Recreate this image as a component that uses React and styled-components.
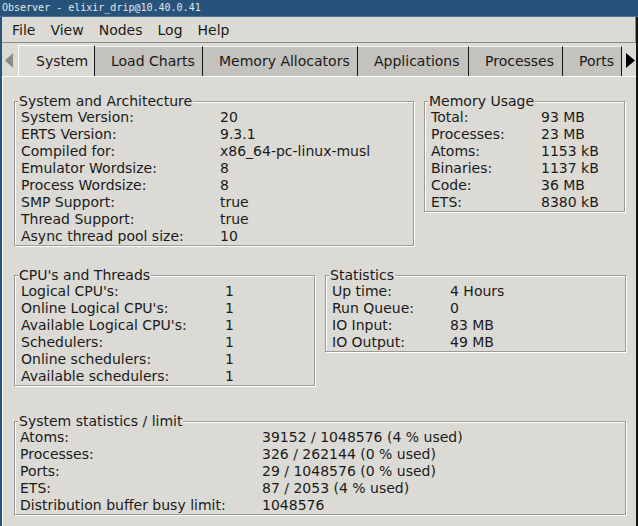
import React from "react";
import styled, { createGlobalStyle } from "styled-components";

const Global = createGlobalStyle`
  html, body { margin: 0; padding: 0; background: #dcdad5; }
  body { width: 638px; height: 526px; overflow: hidden; }
`;

const Window = styled.div`
  width: 638px;
  height: 526px;
  display: flex;
  flex-direction: column;
  overflow: hidden;
  font-family: "DejaVu Sans", Verdana, sans-serif;
  font-size: 14px;
  color: #1a1a1a;
`;

const TitleBar = styled.div`
  flex: none;
  height: 16px;
  background: #27537a;
  border-bottom: 1px solid #4a7096;
  color: #e2e6ea;
  font-family: "DejaVu Sans Mono", monospace;
  font-size: 10px;
  line-height: 15px;
  padding-left: 2px;
  white-space: pre;
`;

const Frame = styled.div`
  flex: 1;
  min-height: 0;
  display: flex;
  flex-direction: column;
  border-left: 2px solid #27537a;
  border-right: 2px solid #141414;
  background: #dcdad5;
`;

const MenuBar = styled.div`
  flex: none;
  height: 25px;
  display: flex;
  align-items: center;
  gap: 15px;
  padding-left: 10px;
  border-bottom: 1px solid #8a8884;
  border-right: 1px solid #8a8884;
`;

const MenuItem = styled.span`
  line-height: 17px;
  padding-top: 1px;
`;

const TabStrip = styled.div`
  flex: none;
  height: 33px;
  display: flex;
  align-items: flex-end;
`;

const ArrowBox = styled.div`
  flex: ${(p) => (p.$grow ? 1 : "none")};
  width: ${(p) => (p.$grow ? "auto" : "16px")};
  height: 33px;
  display: flex;
  align-items: center;
  padding-left: ${(p) => (p.$grow ? "4px" : "3px")};
  padding-top: 1px;
  box-sizing: border-box;
`;

const Tab = styled.div`
  flex: none;
  box-sizing: border-box;
  width: ${(p) => p.$w}px;
  height: ${(p) => (p.$active ? "31px" : "30px")};
  display: flex;
  align-items: center;
  padding: ${(p) => (p.$active ? "1px 0 0 17px" : "0 0 0 16px")};
  background: ${(p) => (p.$active ? "#dcdad5" : "#c4c2bd")};
  border-top: 1px solid ${(p) => (p.$active ? "#ffffff" : "#f2f1ef")};
  border-left: ${(p) => (p.$active ? "1px solid #ffffff" : "none")};
  border-right: 1px solid #141414;
  line-height: 17px;
  white-space: nowrap;
  overflow: hidden;
`;

const Panel = styled.div`
  flex: 1;
  min-height: 0;
  border-top: 1px solid #ffffff;
  border-left: 1px solid #ffffff;
  padding: 16px 0 0 11px;
  display: flex;
  flex-direction: column;
`;

const Row = styled.div`
  display: flex;
  align-items: flex-start;
  gap: 10px;
  margin-top: ${(p) => p.$top || 0}px;
`;

const Group = styled.fieldset`
  box-sizing: border-box;
  width: ${(p) => p.$w}px;
  margin: 0;
  padding: 0;
  min-width: 0;
  border: 1px solid #9c9a96;
  box-shadow: inset 1px 1px 0 #ffffff, 1px 1px 0 #ffffff;
`;

const Legend = styled.legend`
  margin-left: 3px;
  padding: 0 1px;
  line-height: 16px;
  background: #dcdad5;
`;

const Grid = styled.div`
  display: grid;
  grid-template-columns: ${(p) => p.$label}px auto;
  line-height: 17px;
  padding-left: ${(p) => p.$pad || 6}px;
  white-space: nowrap;
`;

const Cell = styled.span``;

function Info({ title, width, labelWidth, rows, pad }) {
  return (
    <Group $w={width}>
      <Legend>{title}</Legend>
      <Grid $label={labelWidth} $pad={pad}>
        {rows.map(([k, v]) => (
          <React.Fragment key={k}>
            <Cell>{k}</Cell>
            <Cell>{v}</Cell>
          </React.Fragment>
        ))}
      </Grid>
    </Group>
  );
}

const LeftArrow = () => (
  <svg width="8" height="15" viewBox="0 0 8 15">
    <polygon points="8,0 8,15 0,7.5" fill="#8d8b87" />
  </svg>
);
const RightArrow = () => (
  <svg width="9" height="15" viewBox="0 0 9 15">
    <polygon points="0,0 0,15 9,7.5" fill="#000" />
  </svg>
);

const tabs = [
  ["System", 77],
  ["Load Charts", 108],
  ["Memory Allocators", 155],
  ["Applications", 111],
  ["Processes", 94],
  ["Ports", 59],
];

export default function App() {
  return (
    <>
      <Global />
      <Window>
        <TitleBar>Observer - elixir_drip@10.40.0.41</TitleBar>
        <Frame>
          <MenuBar>
            {["File", "View", "Nodes", "Log", "Help"].map((m) => (
              <MenuItem key={m}>{m}</MenuItem>
            ))}
          </MenuBar>
          <TabStrip>
            <ArrowBox>
              <LeftArrow />
            </ArrowBox>
            {tabs.map(([t, w], i) => (
              <Tab key={t} $w={w} $active={i === 0}>
                {t}
              </Tab>
            ))}
            <ArrowBox $grow>
              <RightArrow />
            </ArrowBox>
          </TabStrip>
          <Panel>
            <Row>
              <Info
                title="System and Architecture"
                width={400}
                labelWidth={199}
                rows={[
                  ["System Version:", "20"],
                  ["ERTS Version:", "9.3.1"],
                  ["Compiled for:", "x86_64-pc-linux-musl"],
                  ["Emulator Wordsize:", "8"],
                  ["Process Wordsize:", "8"],
                  ["SMP Support:", "true"],
                  ["Thread Support:", "true"],
                  ["Async thread pool size:", "10"],
                ]}
              />
              <Info
                title="Memory Usage"
                width={201}
                labelWidth={110}
                rows={[
                  ["Total:", "93 MB"],
                  ["Processes:", "23 MB"],
                  ["Atoms:", "1153 kB"],
                  ["Binaries:", "1137 kB"],
                  ["Code:", "36 MB"],
                  ["ETS:", "8380 kB"],
                ]}
              />
            </Row>
            <Row $top={21}>
              <Info
                title="CPU's and Threads"
                width={301}
                labelWidth={204}
                rows={[
                  ["Logical CPU's:", "1"],
                  ["Online Logical CPU's:", "1"],
                  ["Available Logical CPU's:", "1"],
                  ["Schedulers:", "1"],
                  ["Online schedulers:", "1"],
                  ["Available schedulers:", "1"],
                ]}
              />
              <Info
                title="Statistics"
                width={301}
                labelWidth={118}
                rows={[
                  ["Up time:", "4 Hours"],
                  ["Run Queue:", "0"],
                  ["IO Input:", "83 MB"],
                  ["IO Output:", "49 MB"],
                ]}
              />
            </Row>
            <Row $top={27}>
              <Info
                title="System statistics / limit"
                width={612}
                labelWidth={242}
                pad={5}
                rows={[
                  ["Atoms:", "39152 / 1048576 (4 % used)"],
                  ["Processes:", "326 / 262144 (0 % used)"],
                  ["Ports:", "29 / 1048576 (0 % used)"],
                  ["ETS:", "87 / 2053 (4 % used)"],
                  ["Distribution buffer busy limit:", "1048576"],
                ]}
              />
            </Row>
          </Panel>
        </Frame>
      </Window>
    </>
  );
}
